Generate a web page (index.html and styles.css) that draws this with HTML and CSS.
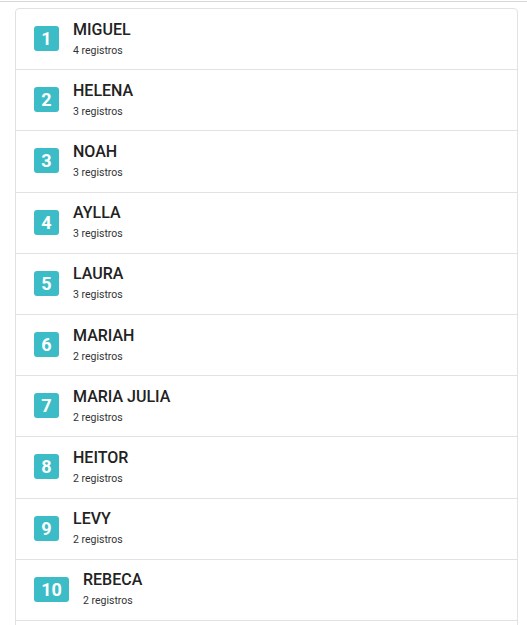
FILE: index.html
```html
<!DOCTYPE html>
<html lang="pt">
<head>
<meta charset="utf-8">
<link rel="stylesheet" href="styles.css">
</head>
<body>
<div class="topline"></div>
<ul class="list">
  <li class="row"><span class="badge">1</span><div class="info"><div class="name">MIGUEL</div><div class="count">4 registros</div></div></li>
  <li class="row"><span class="badge">2</span><div class="info"><div class="name">HELENA</div><div class="count">3 registros</div></div></li>
  <li class="row"><span class="badge">3</span><div class="info"><div class="name">NOAH</div><div class="count">3 registros</div></div></li>
  <li class="row"><span class="badge">4</span><div class="info"><div class="name">AYLLA</div><div class="count">3 registros</div></div></li>
  <li class="row"><span class="badge">5</span><div class="info"><div class="name">LAURA</div><div class="count">3 registros</div></div></li>
  <li class="row"><span class="badge">6</span><div class="info"><div class="name">MARIAH</div><div class="count">2 registros</div></div></li>
  <li class="row"><span class="badge">7</span><div class="info"><div class="name">MARIA JULIA</div><div class="count">2 registros</div></div></li>
  <li class="row"><span class="badge">8</span><div class="info"><div class="name">HEITOR</div><div class="count">2 registros</div></div></li>
  <li class="row"><span class="badge">9</span><div class="info"><div class="name">LEVY</div><div class="count">2 registros</div></div></li>
  <li class="row"><span class="badge badge-wide">10</span><div class="info"><div class="name">REBECA</div><div class="count">2 registros</div></div></li>
</ul>
</body>
</html>
```
FILE: styles.css
```css
html, body {
  margin: 0;
  padding: 0;
  background: #fff;
  font-family: Roboto, "Liberation Sans", sans-serif;
  overflow: hidden;
}
.topline {
  margin-top: 1px;
  height: 0;
  border-top: 1px solid #d9d9d9;
}
.list {
  list-style: none;
  margin: 6px 0 0 15px;
  padding: 0 0 20px;
  width: 501px;
  border: 1px solid #e2e2e2;
  border-radius: 4px;
}
.row {
  display: flex;
  align-items: center;
  gap: 14px;
  height: 60.2px;
  padding: 0 18px;
  border-bottom: 1px solid #e2e2e2;
}
.badge {
  display: flex;
  align-items: center;
  justify-content: center;
  min-width: 25px;
  height: 25px;
  box-sizing: border-box;
  padding: 0 5px;
  background: #3bbcc7;
  border-radius: 3px;
  color: #fff;
  font-weight: 700;
  font-size: 18px;
  margin-top: -1px;
}
.badge-wide {
  min-width: 35px;
  padding: 0 7px;
}
.info {
  display: flex;
  flex-direction: column;
  margin-top: -2px;
}
.name {
  font-size: 16px;
  line-height: 19px;
  font-weight: 500;
  color: #222;
}
.count {
  margin-top: 6px;
  font-size: 10.5px;
  line-height: 12px;
  color: #333;
}
```
